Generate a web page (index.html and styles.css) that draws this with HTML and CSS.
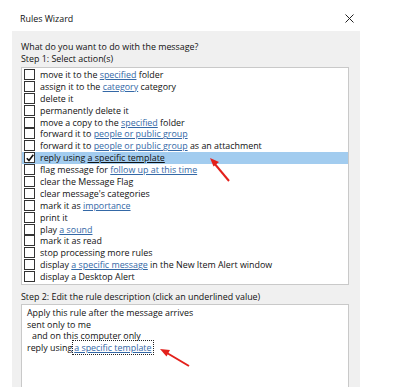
FILE: index.html
```html
<!DOCTYPE html>
<html lang="en">
<head>
    <meta charset="UTF-8">
    <meta name="viewport" content="width=device-width, initial-scale=1.0">
    <title>Rules Wizard</title>
    <link rel="stylesheet" href="styles.css">
</head>
<body>
    <div class="window">
        <div class="titlebar">
            <span class="title">Rules Wizard</span>
            <svg class="close" width="9" height="9" viewBox="0 0 9 9">
                <path d="M0.5 0.5 L8.5 8.5 M8.5 0.5 L0.5 8.5" stroke="#222" stroke-width="1" fill="none"/>
            </svg>
        </div>
        <div class="panel">
            <div class="line">What do you want to do with the message?</div>
            <div class="line">Step 1: Select action(s)</div>
            <ul class="actions">
                <li><span class="box"></span>move it to the <a>specified</a> folder</li>
                <li><span class="box"></span>assign it to the <a>category</a> category</li>
                <li><span class="box"></span>delete it</li>
                <li><span class="box"></span>permanently delete it</li>
                <li><span class="box"></span>move a copy to the <a>specified</a> folder</li>
                <li><span class="box"></span>forward it to <a>people or public group</a></li>
                <li><span class="box"></span>forward it to <a>people or public group</a> as an attachment</li>
                <li class="selected"><span class="box"><svg width="8" height="8" viewBox="0 0 8 8"><path d="M0.8 4.2 L3 6.6 L7.3 0.8" stroke="#111" stroke-width="1.6" fill="none"/></svg></span>reply using <a>a specific template</a></li>
                <li><span class="box"></span>flag message for <a>follow up at this time</a></li>
                <li><span class="box"></span>clear the Message Flag</li>
                <li><span class="box"></span>clear message's categories</li>
                <li><span class="box"></span>mark it as <a>importance</a></li>
                <li><span class="box"></span>print it</li>
                <li><span class="box"></span>play <a>a sound</a></li>
                <li><span class="box"></span>mark it as read</li>
                <li><span class="box"></span>stop processing more rules</li>
                <li><span class="box"></span>display <a>a specific message</a> in the New Item Alert window</li>
                <li><span class="box"></span>display a Desktop Alert</li>
            </ul>
            <div class="line step2">Step 2: Edit the rule description (click an underlined value)</div>
            <div class="description">
                <div class="line">Apply this rule after the message arrives</div>
                <div class="line">sent only to me</div>
                <div class="line indent">and on this computer only</div>
                <div class="line">reply using<a class="focused">a specific template</a></div>
            </div>
        </div>
    </div>

    <svg class="arrow arrow-one" width="30" height="30" viewBox="0 0 30 30">
        <path d="M24 28 L9 10" stroke="#e3201b" stroke-width="2" fill="none"/>
        <path d="M5 5 L14 9 L8.5 13.5 Z" fill="#e3201b"/>
    </svg>
    <svg class="arrow arrow-two" width="36" height="26" viewBox="0 0 36 26">
        <path d="M33 22 L11 9" stroke="#e3201b" stroke-width="2" fill="none"/>
        <path d="M4 5 L14 6 L10.5 12.5 Z" fill="#e3201b"/>
    </svg>
</body>
</html>
```

FILE: styles.css
```css
body {
    font-family: 'Open Sans', 'Noto Sans', sans-serif;
    font-size: 8.9px;
    color: #111;
    margin: 0;
    padding: 0;
    background: #fff;
    height: 387px;
    overflow: hidden;
    position: relative;
}
.window {
    width: 372px;
    height: 387px;
    display: flex;
    flex-direction: column;
    overflow: hidden;
}
.titlebar {
    height: 31px;
    display: flex;
    align-items: center;
    justify-content: space-between;
    padding: 0 18px 0 20px;
    box-sizing: border-box;
    flex-shrink: 0;
}
.title {
    margin-top: 6px;
}
.close {
    margin-top: 5px;
}
.panel {
    flex: 1;
    margin: 0 12px;
    background: #f0f0f0;
    padding: 10px 11px 0 9px;
    overflow: hidden;
}
.line {
    height: 12px;
    line-height: 12px;
    white-space: nowrap;
}
.actions {
    list-style: none;
    margin: 2px 0 0;
    padding: 1px 0;
    background: #fff;
    border: 1px solid #c9c9c9;
}
.actions li {
    height: 11.9px;
    line-height: 12px;
    white-space: nowrap;
    padding-left: 2px;
}
.actions li.selected {
    background: #a2ccef;
}
.box {
    display: inline-block;
    vertical-align: -2px;
    width: 9px;
    height: 9px;
    border: 1px solid #333;
    background: #fff;
    margin-right: 5px;
    position: relative;
}
.box svg {
    position: absolute;
    left: 0.5px;
    top: 0.5px;
}
a {
    color: #3468a6;
    text-decoration: underline;
    text-underline-offset: 1px;
}
.selected a {
    color: #111;
}
.step2 {
    margin-top: 6px;
}
.description {
    margin-top: 1px;
    background: #fff;
    border: 1px solid #c9c9c9;
    border-bottom: none;
    height: 100px;
    padding: 2px 5px 0;
}
.description .line {
    height: 11.7px;
}
.indent {
    padding-left: 5px;
}
.focused {
    outline: 1px dotted #222;
    outline-offset: 0;
    margin-left: 1px;
    padding: 0 1px;
}
.arrow {
    position: absolute;
}
.arrow-one {
    left: 205px;
    top: 153px;
}
.arrow-two {
    left: 156px;
    top: 344px;
}
```
